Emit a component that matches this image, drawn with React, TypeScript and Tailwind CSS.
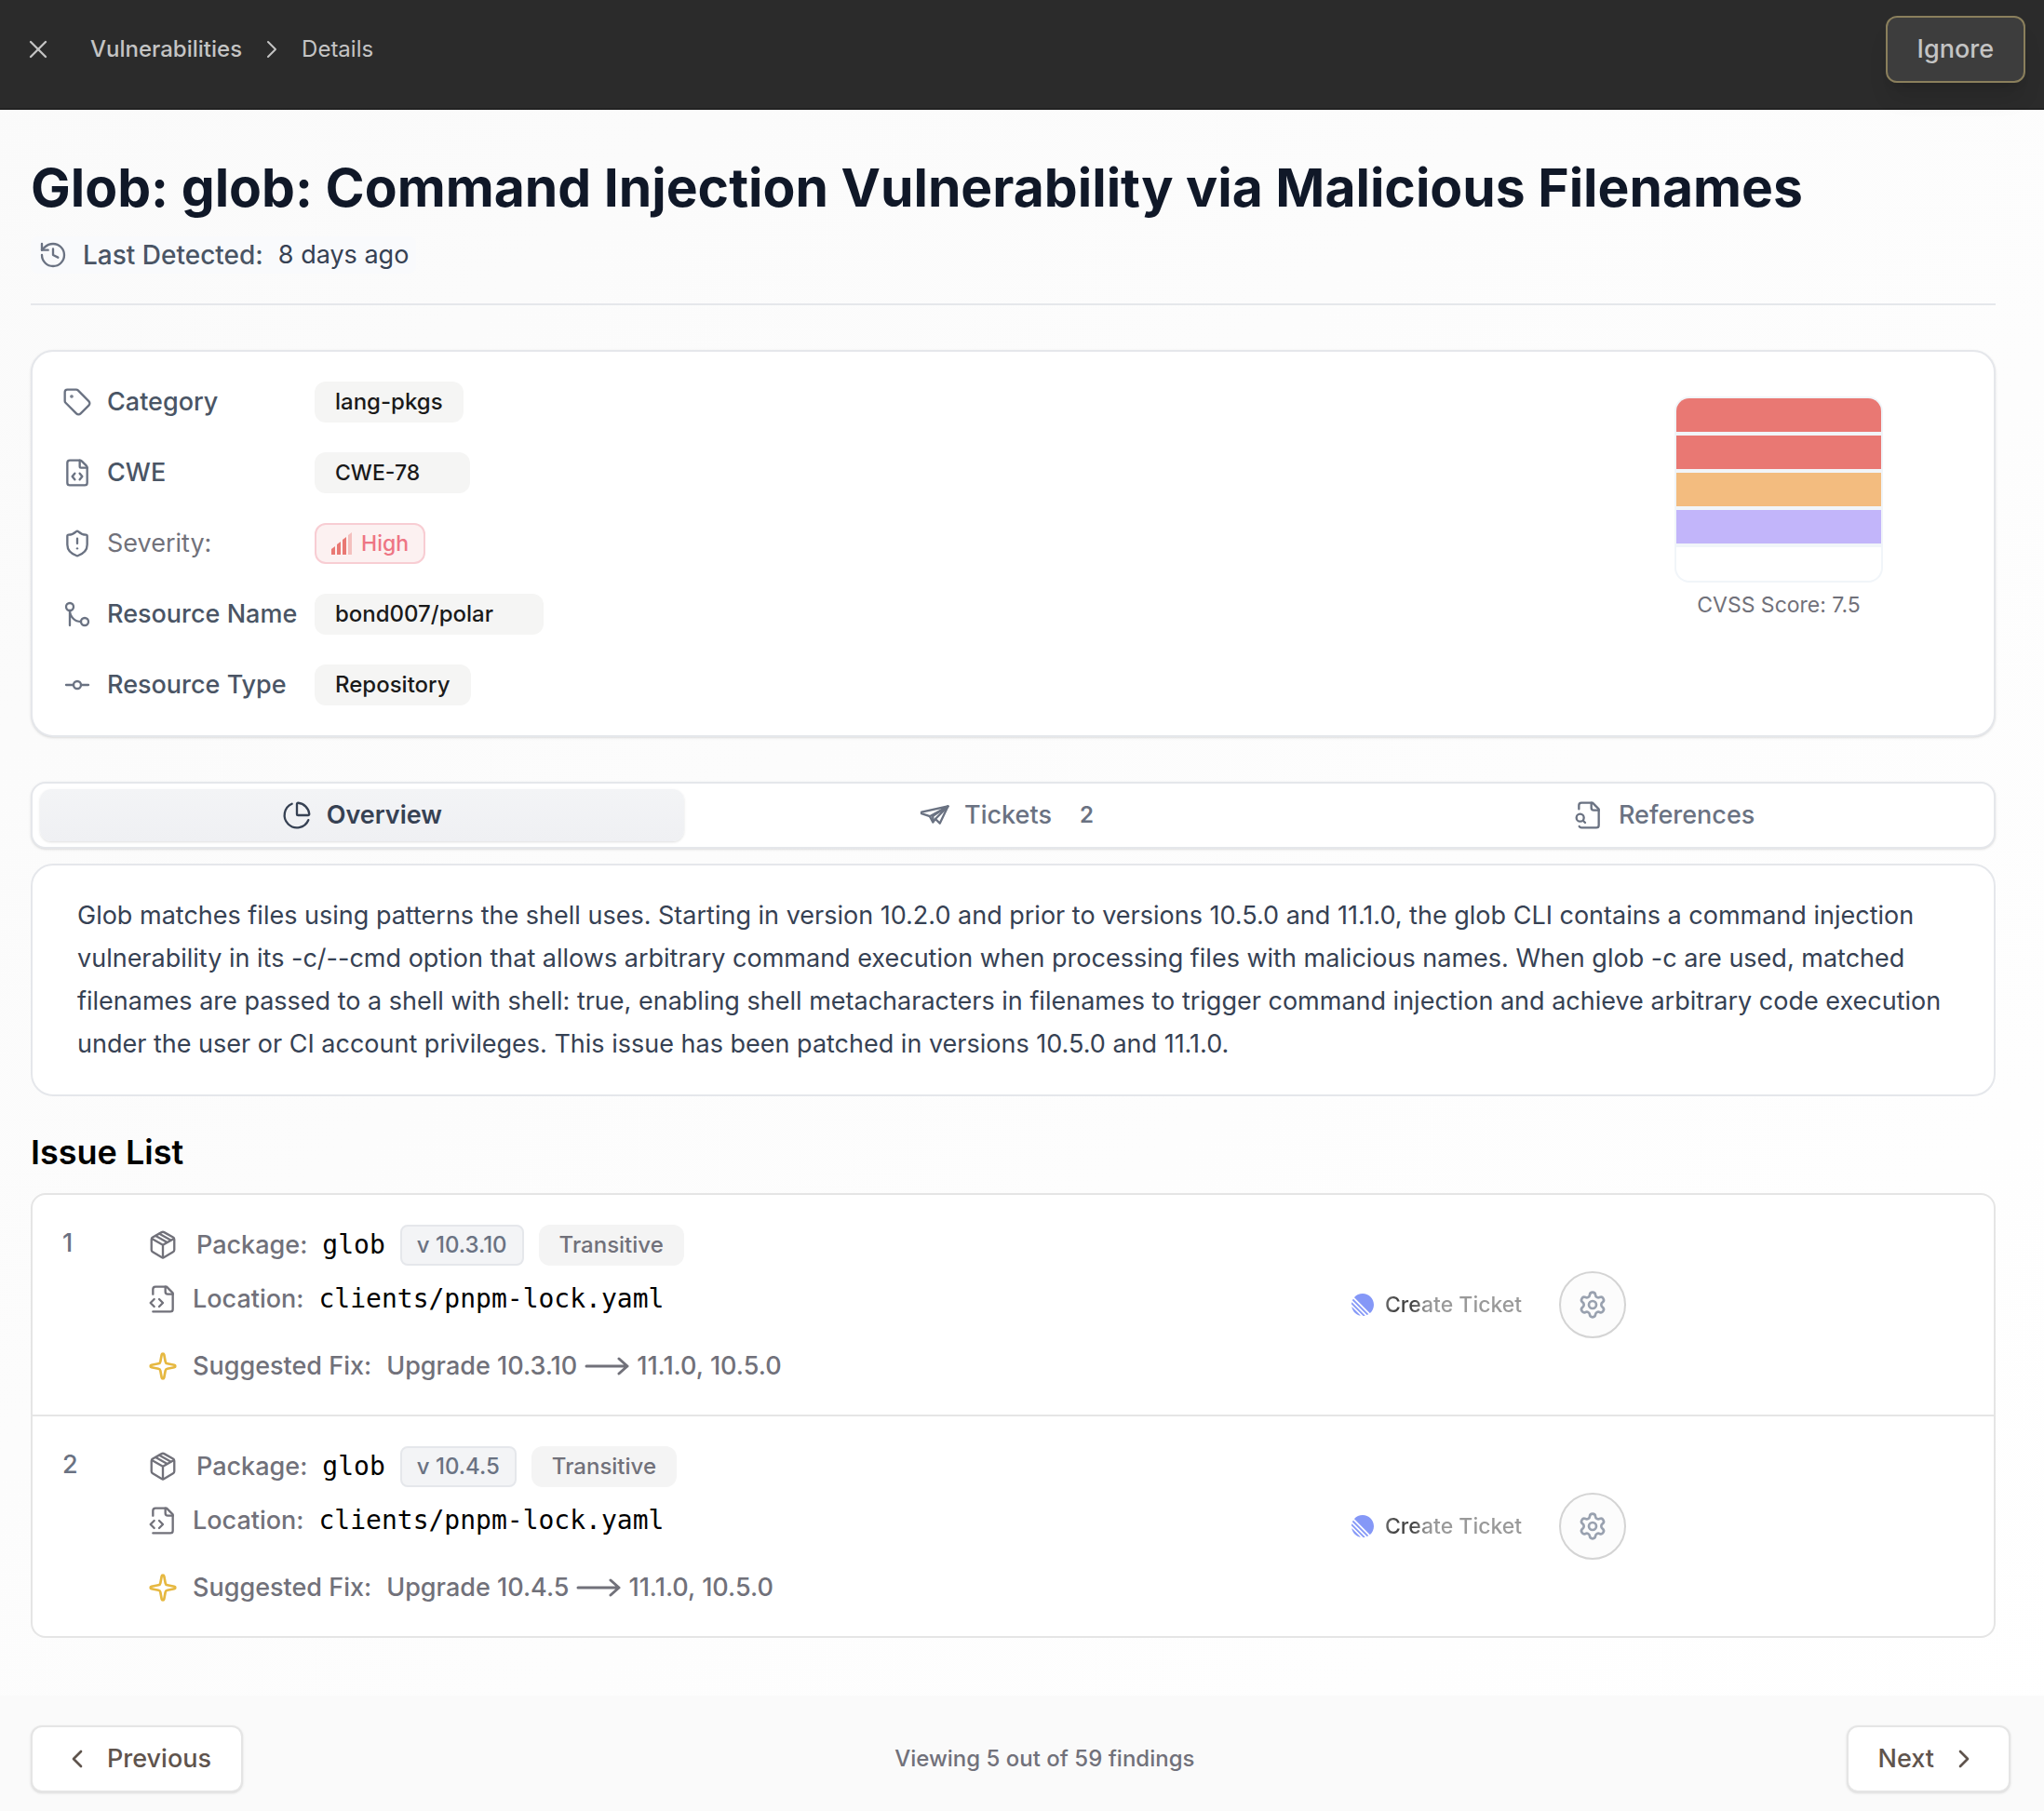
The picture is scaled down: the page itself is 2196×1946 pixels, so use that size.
import {
    ChartPie,
    ChevronLeft,
    ChevronRight,
    FileCode,
    GitCommitHorizontal,
    GitMerge,
    History,
    Settings,
    ShieldAlert,
    Sparkle,
    Tag,
    X,
} from "lucide-react"
import { useState } from "react"

const description = [
    "Glob matches files using patterns the shell uses. Starting in version 10.2.0 and prior to versions 10.5.0 and 11.1.0, the glob CLI contains a command injection",
    "vulnerability in its -c/--cmd option that allows arbitrary command execution when processing files with malicious names. When glob -c are used, matched",
    "filenames are passed to a shell with shell: true, enabling shell metacharacters in filenames to trigger command injection and achieve arbitrary code execution",
    "under the user or CI account privileges. This issue has been patched in versions 10.5.0 and 11.1.0.",
]

const issues = [
    { id: 1, name: "glob", version: "10.3.10", type: "Transitive", location: "clients/pnpm-lock.yaml", fix: "11.1.0, 10.5.0" },
    { id: 2, name: "glob", version: "10.4.5", type: "Transitive", location: "clients/pnpm-lock.yaml", fix: "11.1.0, 10.5.0" },
]

const scoreBars = ["bg-[#e97873]", "bg-[#e97873]", "bg-[#f3bc7f]", "bg-[#c2b5fa]", "bg-white"]

const PlaneIcon = () => (
    <svg viewBox="0 0 24 24" fill="none" stroke="currentColor" strokeWidth="1.75" strokeLinejoin="round" strokeLinecap="round" className="size-8 shrink-0">
        <path d="M22.8 4.8 1.5 9.4v1.2l6.7 2.3 2.5 4.7 2-2.6 3.6 3.5z" />
        <path d="M22.8 4.8 8.2 12.9M22.8 4.8 12.7 15" />
        <path d="m22.8 4.8-12.1 7.8v4.8" />
    </svg>
)

const FileCornerIcon = () => (
    <svg viewBox="0 0 24 24" fill="none" stroke="currentColor" strokeWidth="1.75" strokeLinejoin="round" strokeLinecap="round" className="size-8 shrink-0">
        <path d="M4 22h14a2 2 0 0 0 2-2V7l-5-5H6a2 2 0 0 0-2 2v4" />
        <path d="M14 2v4a2 2 0 0 0 2 2h4" />
        <path d="m5 12-3 3 3 3" />
        <path d="m9 18 3-3-3-3" />
    </svg>
)

const FileLensIcon = () => (
    <svg viewBox="0 0 24 24" fill="none" stroke="currentColor" strokeWidth="1.75" strokeLinejoin="round" strokeLinecap="round" className="size-8 shrink-0">
        <path d="M14 2v4a2 2 0 0 0 2 2h4" />
        <path d="M4.268 21a2 2 0 0 0 1.727 1H18a2 2 0 0 0 2-2V7l-5-5H6a2 2 0 0 0-2 2v3" />
        <path d="m9 18-1.5-1.5" />
        <circle cx="5" cy="14" r="3" />
    </svg>
)

const BoxIcon = () => (
    <svg viewBox="0 0 24 24" fill="none" stroke="currentColor" strokeWidth="1.75" strokeLinejoin="round" strokeLinecap="round" className="size-8 shrink-0">
        <path d="m11 1.6-7.2 4.1a2 2 0 0 0-1 1.7v8.4a2 2 0 0 0 1 1.7l7.2 4.2a2 2 0 0 0 2 0l7.2-4.2a2 2 0 0 0 1-1.7V7.4a2 2 0 0 0-1-1.7L13 1.6a2 2 0 0 0-2 0z" />
        <path d="m3.1 6.7 8.9 5.1 8.9-5.1M12 11.8V22" />
        <path d="m6.2 4.5 9 5.1M9.2 2.8l9 5.1" />
    </svg>
)

const SignalIcon = () => (
    <svg viewBox="0 0 22 24" className="h-6 w-[22px] shrink-0" fill="#e97873">
        <path d="M0 18l4-3v9H0z" />
        <path d="M6 13l4-3v14H6z" />
        <path d="M12 8l4-3v19h-4z" />
        <path d="M18 3l4-3v24h-4z" opacity="0.4" />
    </svg>
)

const LinearIcon = () => (
    <svg viewBox="0 0 100 100" className="size-6 shrink-0" fill="#8598f7">
        <path d="M1.225 61.523c-.222-.949.908-1.546 1.597-.857l36.512 36.512c.69.69.092 1.82-.857 1.597-18.425-4.323-32.93-18.827-37.252-37.252ZM.002 46.889a.99.99 0 0 0 .29.76L52.35 99.71c.201.2.478.307.76.29 2.37-.149 4.695-.46 6.963-.927.765-.157 1.03-1.096.478-1.648L2.576 39.448c-.552-.551-1.491-.286-1.648.479a50.067 50.067 0 0 0-.926 6.962ZM4.21 29.705a.988.988 0 0 0 .208 1.1l64.776 64.776c.289.29.726.375 1.1.208a49.908 49.908 0 0 0 5.185-2.684.981.981 0 0 0 .183-1.54L8.436 24.336a.981.981 0 0 0-1.541.183 49.896 49.896 0 0 0-2.684 5.185Zm8.448-11.631a.986.986 0 0 1-.045-1.354C21.78 6.46 35.111 0 49.952 0 77.592 0 100 22.407 100 50.048c0 14.84-6.46 28.172-16.72 37.338a.986.986 0 0 1-1.354-.045L12.659 18.074Z" />
    </svg>
)

// long arrow between the current version and the fixed ones
const LongArrow = () => (
    <svg viewBox="0 0 48 20" fill="none" stroke="currentColor" strokeWidth="3" strokeLinejoin="round" strokeLinecap="round" className="h-5 w-12 shrink-0">
        <path d="M2 10h44M37 2l9 8-9 8" />
    </svg>
)

function DetailRow({ icon, label, muted, children }: any) {
    return (
        <div className="flex h-11 items-center">
            <dt className={muted ? "flex w-[271px] items-center gap-4 text-[#71717a]" : "flex w-[271px] items-center gap-4 font-medium text-gray-600"}>
                <span className="text-gray-500">{icon}</span>
                <span className="whitespace-nowrap">{label}</span>
            </dt>
            <dd className="flex">{children}</dd>
        </div>
    )
}

export default function App() {
    const [tab, setTab] = useState("overview")

    const tabClass = (name: string) =>
        tab === name
            ? "flex h-14 items-center justify-center gap-4 rounded-xl bg-linear-to-b from-gray-100 to-[#eff0f3] font-semibold text-gray-700 shadow-sm"
            : "flex h-14 items-center justify-center gap-4 rounded-xl font-medium text-gray-500"

    return (
        <div className="min-h-screen bg-linear-to-br from-[#fafafa] to-white font-[Inter,sans-serif] text-[27px] leading-10 text-black">
            <header className="flex items-center justify-between border-b-2 border-[#222222] bg-[#2b2b2b] pt-[17px] pr-5 pb-[27px] pl-[25px] text-[#c4c4c4]">
                <nav className="flex items-center gap-10 text-2xl">
                    <button aria-label="Close"><X className="size-8" strokeWidth={1.75} /></button>
                    <div className="flex items-center gap-4">
                        <a href="#" className="font-medium">Vulnerabilities</a>
                        <ChevronRight className="size-8" strokeWidth={1.5} />
                        <span>Details</span>
                    </div>
                </nav>
                <button className="h-[72px] rounded-xl border-2 border-[#8a7f5c] bg-[#3d3d3d] px-8 font-medium shadow-xl">Ignore</button>
            </header>

            <main className="pt-12 pr-[52px] pb-[62px] pl-[33px]">
                <div className="border-b-2 border-gray-200 pb-8">
                    <h1 className="text-[57px] leading-[72px] font-bold text-gray-900">Glob: glob: Command Injection Vulnerability via Malicious Filenames</h1>
                    <div className="mt-4 flex">
                        <div className="flex items-center gap-4 rounded-lg bg-[#f9fafc] px-2">
                            <History className="size-8 text-gray-500" strokeWidth={1.75} />
                            <span className="text-[28px] font-medium text-gray-600">Last Detected:</span>
                            <span className="text-gray-700">8 days ago</span>
                        </div>
                    </div>
                </div>

                <section className="mt-12 flex justify-between rounded-3xl border-2 border-gray-200 bg-white p-8 shadow-sm">
                    <dl className="flex flex-col gap-8">
                        <DetailRow icon={<Tag className="size-8" strokeWidth={1.75} />} label="Category">
                            <span className="flex h-11 items-center rounded-xl bg-[#f5f5f4] px-[22px] text-2xl font-medium text-[#1a1a1a]">lang-pkgs</span>
                        </DetailRow>
                        <DetailRow icon={<FileCode className="size-8" strokeWidth={1.75} />} label="CWE">
                            <span className="flex h-11 items-center rounded-xl bg-[#f5f5f4] pr-[54px] pl-[22px] text-[23px] font-medium text-[#1a1a1a]">CWE-78</span>
                        </DetailRow>
                        <DetailRow icon={<ShieldAlert className="size-8" strokeWidth={1.75} />} label="Severity:" muted>
                            <span className="flex h-11 items-center gap-2.5 rounded-xl border-2 border-[#f8cdd3] bg-[#fcf1f1] px-4 text-[23px] font-medium text-[#ee7584]">
                                <SignalIcon />
                                High
                            </span>
                        </DetailRow>
                        <DetailRow icon={<GitMerge className="size-8" strokeWidth={1.75} />} label="Resource Name">
                            <span className="flex h-11 items-center rounded-xl bg-[#f5f5f4] pr-[54px] pl-[22px] text-2xl font-medium text-[#1a1a1a]">bond007/polar</span>
                        </DetailRow>
                        <DetailRow icon={<GitCommitHorizontal className="size-8" strokeWidth={1.75} />} label="Resource Type">
                            <span className="flex h-11 items-center rounded-xl bg-[#f5f5f4] px-[22px] text-2xl font-medium text-[#1a1a1a]">Repository</span>
                        </DetailRow>
                    </dl>
                    <div className="flex w-[398px] flex-col items-center pt-4">
                        <div className="flex w-56 flex-col gap-1 overflow-hidden rounded-2xl border-2 border-slate-100 bg-slate-100">
                            {scoreBars.map((bar, i) => (
                                <div key={i} className={`h-9 ${bar}`} />
                            ))}
                        </div>
                        <p className="mt-1 text-[23px] text-[#71717a]">CVSS Score: 7.5</p>
                    </div>
                </section>

                <div role="tablist" className="mt-12 grid grid-cols-3 gap-2 rounded-2xl border-2 border-gray-200 bg-white px-2 py-1.5 shadow-sm">
                    <button role="tab" aria-selected={tab === "overview"} className={tabClass("overview")} onClick={() => setTab("overview")}>
                        <ChartPie className="size-8" strokeWidth={1.75} />
                        Overview
                    </button>
                    <button role="tab" aria-selected={tab === "tickets"} className={tabClass("tickets")} onClick={() => setTab("tickets")}>
                        <PlaneIcon />
                        Tickets
                        <span className="px-3.5 text-2xl font-semibold">2</span>
                    </button>
                    <button role="tab" aria-selected={tab === "references"} className={tabClass("references")} onClick={() => setTab("references")}>
                        <FileLensIcon />
                        References
                    </button>
                </div>

                <section className="mt-4 rounded-3xl border-2 border-gray-200 bg-white px-12 py-[31px]">
                    <p className="leading-[46px] text-gray-700">
                        {description.map((line) => (
                            <span key={line} className="block">{line}</span>
                        ))}
                    </p>
                </section>

                <h2 className="mt-9 mb-5 text-4xl leading-[48px] font-semibold">Issue List</h2>
                <ul className="divide-y-2 divide-[#e5e5e5] rounded-2xl border-2 border-[#e5e5e5] bg-white">
                    {issues.map((item) => (
                        <li key={item.id} className="grid grid-cols-[92px_1fr_658px] px-8 py-8 text-[#71717a]">
                            <span className="font-medium text-gray-500">{item.id}</span>
                            <div>
                                <div className="flex h-11 items-center">
                                    <BoxIcon />
                                    <span className="ml-5 font-medium">Package:</span>
                                    <span className="ml-4 font-['DejaVu_Sans_Mono',monospace] text-[28px] text-black">{item.name}</span>
                                    <span className="ml-4 flex h-11 items-center rounded-lg border-2 border-gray-200 bg-gray-100 px-4 text-2xl font-medium text-gray-500">v {item.version}</span>
                                    <span className="ml-4 flex h-11 items-center rounded-xl bg-[#f4f4f4] px-[22px] text-2xl font-medium">{item.type}</span>
                                </div>
                                <div className="mt-4 flex items-center gap-4">
                                    <FileCornerIcon />
                                    <span className="font-medium">Location:</span>
                                    <span className="font-['DejaVu_Sans_Mono',monospace] text-[28px] text-black">{item.location}</span>
                                </div>
                                <div className="mt-8 flex items-center gap-4 font-medium">
                                    <Sparkle className="size-8 text-[#e6b840]" strokeWidth={2} />
                                    <span>Suggested Fix:</span>
                                    <span className="flex items-center gap-2">
                                        Upgrade {item.version}
                                        <LongArrow />
                                        {item.fix}
                                    </span>
                                </div>
                            </div>
                            <div className="flex items-center gap-10">
                                <button className="flex items-center gap-3 text-[23px] font-medium">
                                    <LinearIcon />
                                    <span className="bg-[linear-gradient(100deg,#777_0%,#444_10%,#444_22%,#999_32%,#999_100%)] bg-clip-text text-transparent">Create Ticket</span>
                                </button>
                                <button aria-label="Ticket settings" className="flex size-[72px] items-center justify-center rounded-full border-2 border-[#d4d4d4] bg-[#fcfcfc] text-gray-400">
                                    <Settings className="size-8" strokeWidth={2} />
                                </button>
                            </div>
                        </li>
                    ))}
                </ul>
            </main>

            <footer className="flex items-center justify-between bg-[#fafafa] pt-8 pr-9 pb-5 pl-[33px]">
                <button className="flex h-[72px] items-center gap-4 rounded-xl border-2 border-[#e5e5e5] bg-white px-8 font-medium text-[#5f544d] shadow-sm">
                    <ChevronLeft className="size-8" strokeWidth={2} />
                    Previous
                </button>
                <p className="text-2xl font-medium text-[#71717a]">Viewing 5 out of 59 findings</p>
                <button className="flex h-[72px] items-center gap-4 rounded-xl border-2 border-[#e5e5e5] bg-white px-8 font-medium text-[#5f544d] shadow-sm">
                    Next
                    <ChevronRight className="size-8" strokeWidth={2} />
                </button>
            </footer>
        </div>
    )
}
